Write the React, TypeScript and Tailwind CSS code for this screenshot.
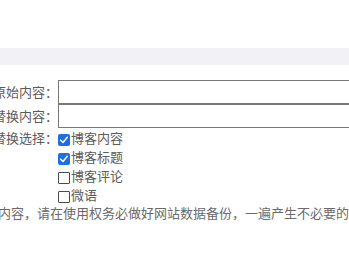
import React from "react";

function Label({ children }: { children: React.ReactNode }) {
  return (
    <div className="w-[58px] shrink-0 flex justify-end whitespace-nowrap">
      <span>{children}</span>
    </div>
  );
}

function Box({ checked }: { checked?: boolean }) {
  if (checked) {
    return (
      <span className="mt-[6px] w-[12px] h-[12px] shrink-0 rounded-[2px] bg-[#1f6fe0] flex items-center justify-center">
        <svg viewBox="0 0 12 12" className="w-[10px] h-[10px]">
          <path d="M2 6.2 L4.8 9 L10 2.8" fill="none" stroke="#fff" strokeWidth="1.8" strokeLinecap="round" strokeLinejoin="round" />
        </svg>
      </span>
    );
  }
  return <span className="mt-[6px] w-[12px] h-[12px] shrink-0 rounded-[1px] border border-[#4a4a4a] bg-white" />;
}

const options = [
  { text: "博客内容", checked: true },
  { text: "博客标题", checked: true },
  { text: "博客评论", checked: false },
  { text: "微语", checked: false },
];

export default function App() {
  return (
    <div className="w-[349px] h-[262px] bg-white overflow-hidden text-[13px] text-[#5c5c5c] font-['Noto_Sans_CJK_SC',sans-serif]">
      <div className="h-[48px]" />
      <div className="h-[17px] bg-[#f1f1f6]" />
      <div className="pt-[15px]">
        <div className="flex items-center h-[24px]">
          <Label>原始内容：</Label>
          <input className="w-[400px] h-[24px] shrink-0 border border-[#767676] bg-white outline-none" />
        </div>
        <div className="flex items-center h-[24px]">
          <Label>替换内容：</Label>
          <input className="w-[400px] h-[24px] shrink-0 border border-[#767676] bg-white outline-none" />
        </div>
        <div className="flex">
          <div className="h-[19px] flex items-center">
            <Label>替换选择：</Label>
          </div>
          <div className="flex flex-col">
            {options.map((o) => (
              <div key={o.text} className="flex h-[19px] items-start">
                <Box checked={o.checked} />
                <span className="ml-[1px] leading-[19px] whitespace-nowrap">{o.text}</span>
              </div>
            ))}
          </div>
        </div>
        <p className="ml-[-2px] leading-[17px] whitespace-nowrap text-[#6a6a6a]">
          内容，请在使用权务必做好网站数据备份，一遍产生不必要的麻烦
        </p>
      </div>
    </div>
  );
}
